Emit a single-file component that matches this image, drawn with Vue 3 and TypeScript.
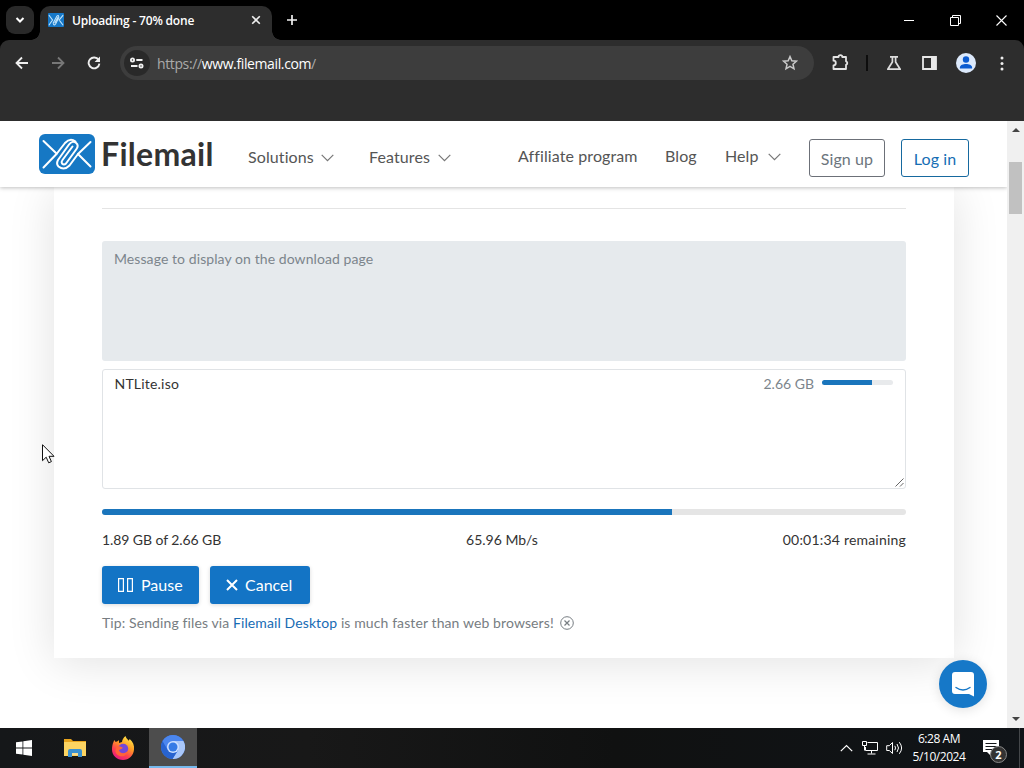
<script setup lang="ts">
const uploaded = 1.89
const total = 2.66
const percent = (uploaded / total) * 100 - 0.1
</script>

<template>
  <div class="desktop">
    <header class="tabstrip">
      <div class="tab-search">
        <svg width="10" height="8" viewBox="0 0 10 8"><path d="M1.5 2 5 5.5 8.500 2" fill="none" stroke="#fff" stroke-width="2" /></svg>
      </div>
      <div class="tab">
        <svg class="favicon" width="16" height="14" viewBox="0 0 56 40" preserveAspectRatio="none">
          <rect width="56" height="40" rx="3" fill="#1678c8" />
          <g fill="none" stroke="#bfe3fb" stroke-width="3.500" stroke-linecap="round">
            <path d="M4 7 16 20 4 34M52 7 39 20 52 34M18 29 31 9Q37 4 38 13L27 31Q20 38 18 29M24 28 34 13" />
          </g>
        </svg>
        <span class="tab-title">Uploading - 70% done</span>
        <svg class="tab-close" width="10" height="10" viewBox="0 0 10 10"><path d="m1.200 1.200 7.600 7.600m0-7.600L1.200 8.800" stroke="#eee" stroke-width="1.600" /></svg>
      </div>
      <svg class="new-tab" width="12" height="12" viewBox="0 0 12 12"><path d="M6 1v10M1 6h10" stroke="#f0f0f0" stroke-width="1.700" /></svg>
      <div class="window-buttons">
        <svg width="11" height="11" viewBox="0 0 11 11"><path d="M0 5.500h10" stroke="#fff" /></svg>
        <svg width="11" height="11" viewBox="0 0 11 11"><path d="M.5 2.500h8v8h-8zM2.500 2.500v-2h8v8h-2" fill="none" stroke="#fff" /></svg>
        <svg width="11" height="11" viewBox="0 0 11 11"><path d="m.5.5 10 10m0-10-10 10" stroke="#fff" stroke-width="1.100" /></svg>
      </div>
    </header>

    <div class="toolbar">
      <div class="toolbar-row">
        <svg class="back" width="14" height="14" viewBox="0 0 14 14"><path d="M13 7H2M7 1.500 1.500 7 7 12.500" fill="none" stroke="#eee" stroke-width="1.800" /></svg>
        <svg class="forward" width="14" height="14" viewBox="0 0 14 14"><path d="M1 7h11M7 1.500 12.500 7 7 12.500" fill="none" stroke="#777" stroke-width="1.800" /></svg>
        <svg class="reload" width="14" height="14" viewBox="0 0 14 14"><path d="M11.600 4A5.400 5.400 0 1 0 12.400 7.600" fill="none" stroke="#eee" stroke-width="1.900" /><path d="M13 .5V6H7.600z" fill="#eee" /></svg>
        <div class="omnibox">
          <div class="site-info">
            <svg width="14" height="12" viewBox="0 0 14 12"><g fill="none" stroke="#f2f2f2" stroke-width="1.800"><circle cx="2.500" cy="3" r="1.600" /><path d="M6.300 3H12.500M1 9h6.500" /><circle cx="11" cy="9" r="1.600" /></g></svg>
          </div>
          <span class="url"><i>https://</i>www.filemail.com<i>/</i></span>
          <svg class="star" width="16" height="16" viewBox="0 0 16 16"><path d="m8 1.600 1.850 4.200 4.550.42-3.420 3.050 1 4.500L8 11.400l-3.980 2.370 1-4.500L1.600 6.220l4.550-.42z" fill="none" stroke="#c9c9c9" stroke-width="1.500" /></svg>
        </div>
        <svg class="puzzle" width="18" height="18" viewBox="0 0 18 18"><path d="M1.500 4h5a1.900 1.900 0 0 1 3.800 0H14v4.300a1.900 1.900 0 0 1 0 3.600V16H1.500v-3.700a2.300 2.300 0 0 0 0-4.600z" fill="none" stroke="#e4e4e4" stroke-width="1.800" stroke-linejoin="round" /></svg>
        <i class="divider"></i>
        <svg class="flask" width="16" height="16" viewBox="0 0 16 16"><path d="M4 1.800h8M6.400 2v5L1.800 14.200h12.400L9.600 7V2" fill="none" stroke="#dedede" stroke-width="1.700" stroke-linejoin="round" /></svg>
        <svg class="side-panel" width="15" height="14" viewBox="0 0 15 14"><path d="M1 1h13v12H1z" fill="none" stroke="#e8e8e8" stroke-width="1.800" /><path d="M9 1h5v12H9z" fill="#e8e8e8" /></svg>
        <svg class="profile" width="20" height="20" viewBox="0 0 20 20"><circle cx="10" cy="10" r="10" fill="#dce9fb" /><circle cx="10" cy="6.500" r="3.200" fill="#0b5bd0" /><path d="M3.900 15.500v-1.100c0-2.200 3.300-3.400 6.100-3.400s6.100 1.200 6.100 3.400v1.100z" fill="#0b5bd0" /></svg>
        <svg class="kebab" width="4" height="15" viewBox="0 0 4 15"><g fill="#eee"><circle cx="2" cy="2" r="1.500" /><circle cx="2" cy="7.500" r="1.500" /><circle cx="2" cy="13" r="1.500" /></g></svg>
      </div>
    </div>

    <div class="viewport">
      <main class="page">
        <nav class="site-nav">
          <svg class="logo" width="56" height="40" viewBox="0 0 56 40">
            <rect width="56" height="40" rx="6" fill="#1678c4" />
            <g fill="none" stroke="#fff" stroke-width="2" stroke-linecap="round" stroke-linejoin="round">
              <path d="M4.500 7 17.500 19.500M17.500 20 4.500 33.500M51.500 8 39 20 51.500 32.500" />
              <path d="M39 20 30.500 31.500Q25 37 19.500 32.500 17 30 19 26L30 10.500Q33.500 6 37.200 9 40 11.500 37.500 15L27 29.500Q25 31.500 23 29.500 22 28 23.500 26L33.500 12.500" />
              <path d="M17.500 20 26 9Q31 3.500 36.500 7.500" />
            </g>
          </svg>
          <span class="wordmark">Filemail</span>
          <a class="nav-item solutions">Solutions</a>
          <svg class="chevron" width="13" height="8" viewBox="0 0 13 8"><path d="m.7.8 5.800 5.800L12.300.8" /></svg>
          <a class="nav-item features">Features</a>
          <svg class="chevron" width="13" height="8" viewBox="0 0 13 8"><path d="m.7.8 5.800 5.800L12.300.8" /></svg>
          <a class="nav-item affiliate">Affiliate program</a>
          <a class="nav-item blog">Blog</a>
          <a class="nav-item help">Help</a>
          <svg class="chevron help-chevron" width="13" height="8" viewBox="0 0 13 8"><path d="m.7.8 5.800 5.800L12.300.8" /></svg>
          <button class="outline signup">Sign up</button>
          <button class="outline login">Log in</button>
        </nav>

        <section class="card">
          <hr />
          <div class="message">Message to display on the download page</div>
          <div class="files">
            <span class="file-name">NTLite.iso</span>
            <span class="file-size">2.66 GB</span>
            <div class="mini-bar"><div :style="{ width: percent + '%' }"></div></div>
            <svg class="resize" width="9" height="9" viewBox="0 0 9 9"><path d="M.5 8.500l8-8M5 8.500 8.500 5" stroke="#555" stroke-width=".9" /></svg>
          </div>
          <div class="bar"><div :style="{ width: percent + '%' }"></div></div>
          <div class="stats">
            <span class="done">1.89 GB of 2.66 GB</span>
            <span class="speed">65.96 Mb/s</span>
            <span class="left">00:01:34 remaining</span>
          </div>
          <div class="actions">
            <button class="solid pause">
              <svg width="16" height="16" viewBox="0 0 16 16"><path d="M.6 1.600h4.800v12.800H.6zM9.600 1.600h4.800v12.800H9.600z" fill="none" stroke="#fff" stroke-width="1.200" /></svg>
              <span>Pause</span>
            </button>
            <button class="solid cancel">
              <svg width="12" height="12" viewBox="0 0 12 12"><path d="m1 1 10 10M11 1 1 11" stroke="#fff" stroke-width="2" /></svg>
              <span>Cancel</span>
            </button>
          </div>
          <p class="tip">
            <span>Tip: Sending files via <a>Filemail Desktop</a> is much faster than web browsers!</span>
            <svg width="14" height="14" viewBox="0 0 14 14"><g fill="none" stroke="#777d82"><circle cx="7" cy="7" r="6.300" /><path d="m4.500 4.500 5 5m0-5-5 5" stroke-width="1.200" /></g></svg>
          </p>
        </section>
      </main>
      <div class="scrollbar">
        <svg width="8" height="4" viewBox="0 0 8 4"><path d="M0 4 4 0l4 4z" fill="#444" /></svg>
        <div class="thumb"></div>
        <svg class="down" width="8" height="4" viewBox="0 0 8 4"><path d="M0 0h8L4 4z" fill="#444" /></svg>
      </div>
      <div class="chat">
        <svg width="22" height="25" viewBox="0 0 22 25"><path d="M3 0h16q3 0 3 3v21.500L17 22H3q-3 0-3-3V3q0-3 3-3z" fill="#fff" /><path d="M4 15.500q7 5 14 0" fill="none" stroke="#1678c8" stroke-width="1.400" stroke-linecap="round" /></svg>
      </div>
      <svg class="cursor" width="13" height="20" viewBox="0 0 13 20"><path d="M.5.700v16l3.700-3.500 2.500 5.600 2.700-1.200L7 12.300h5z" fill="#fff" stroke="#111" /></svg>
    </div>

    <footer class="taskbar">
      <div class="task start"><svg width="16" height="16" viewBox="0 0 16 16"><path d="M0 2.300 6.500 1.400v6.100H0zM7.300 1.300 16 0v7.500H7.300zM0 8.400h6.500v6.200L0 13.700zM7.300 8.400H16V16l-8.700-1.300z" fill="#fff" /></svg></div>
      <div class="task explorer"><svg width="22" height="18" viewBox="0 0 22 18"><path d="M0 0h7l2 2h13v4H0z" fill="#e8a41d" /><path d="M0 3h22v14H0z" fill="#fcd462" /><path d="M4 18v-6q0-2 2-2h10q2 0 2 2v6h-4v-4H8v4z" fill="#3a91d0" /><path d="M8 14h6v2H8z" fill="#f8dd91" /></svg></div>
      <div class="task firefox">
        <svg width="24" height="24" viewBox="0 0 24 24">
          <defs>
            <linearGradient id="flame" x1=".8" y1="0" x2=".25" y2="1"><stop offset="0" stop-color="#fff04d" /><stop offset=".4" stop-color="#ff9a24" /><stop offset=".7" stop-color="#ff4050" /><stop offset="1" stop-color="#e31587" /></linearGradient>
          </defs>
          <path d="M2.500 6 3.200 4l1.500 2L7 5l1-1v3l3-1c.3-2.500 1.500-4.500 3.500-6 .3 2 2 3 3.200 4.800l1-1.800C22 6 23.500 9 23 13.500 22.500 19.500 18 24 12 24S1 19.500 1 13.500C1 10.500 1.500 8 2.500 6z" fill="url(#flame)" />
          <circle cx="12.200" cy="12.800" r="5" fill="#7548d8" />
          <path d="M6 10.500c2-.7 4 .1 6 1.200-1.500 2-3.500 1.300-4 2.800 1 3 6 4 9 0-1 5-5 7-9 5.200S3.500 14 6 10.500z" fill="#ff6438" />
        </svg>
      </div>
      <div class="task active">
        <svg width="24" height="24" viewBox="0 0 24 24">
          <circle cx="12" cy="12" r="12" fill="#3e78e5" />
          <path d="M12 6h10.400A12 12 0 0 1 11.500 24L17 15.200z" fill="#a9c7fa" />
          <path d="M1.600 6A12 12 0 0 0 11.500 24L17 15 7 15z" fill="#2863cf" />
          <path d="M1.600 6A12 12 0 0 1 22.400 6H12l-5.200 9z" fill="#4b86ee" />
          <circle cx="12" cy="12" r="6" fill="#cfe1ff" /><circle cx="12" cy="12" r="4.500" fill="#367be6" />
        </svg>
      </div>
      <div class="tray">
        <svg width="13" height="8" viewBox="0 0 13 8"><path d="M.8 7.200 6.500 1.500l5.700 5.700" fill="none" stroke="#fff" stroke-width="1.200" /></svg>
        <svg class="network" width="17" height="14" viewBox="0 0 17 14"><g fill="none" stroke="#fff"><path d="M5.500 1.500h10v8h-12V6M.5.500h4v4h-4zM2.500 4.500v5M9.500 9.500v3M5.500 13h8" /></g></svg>
        <svg class="sound" width="18" height="14" viewBox="0 0 18 14"><g fill="none" stroke="#fff"><path d="M.7 4.700h2.600L6.500 1.500v11L3.300 9.500H.7z" /><path d="M8.800 4.800q1.500 2.200 0 4.400M11 3q3 4 0 8M13.300 1.200q4.600 5.800 0 11.600" /></g></svg>
        <div class="clock"><span class="time">6:28 AM</span><span class="date">5/10/2024</span></div>
        <div class="notify">
          <svg width="16" height="16" viewBox="0 0 16 16"><path d="M0 0h16v12H8v4l-4-4H0z" fill="#fff" /><path d="M2.500 3.500h11M2.500 6.500h11M2.500 9.500h7" stroke="#14171a" /></svg>
          <b>2</b>
        </div>
        <i class="peek"></i>
      </div>
    </footer>
  </div>
</template>

<style>
html, body { margin: 0; overflow: hidden; }
</style>

<style scoped>
.desktop { width: 1024px; height: 768px; display: flex; flex-direction: column; overflow: hidden; background: #fff; font-family: "Open Sans", sans-serif; box-sizing: border-box; }
.desktop * { box-sizing: border-box; }
svg { display: block; flex: none; }
i { font-style: normal; }
.tabstrip { height: 40px; flex: none; background: #000; display: flex; align-items: center; padding: 0 17px 0 6px; }
.tab-search { width: 28px; height: 28px; border-radius: 9px; background: #292929; display: grid; place-items: center; }
.tab { position: relative; margin-left: 6px; margin-top: 6px; width: 232px; height: 34px; border-radius: 10px 10px 0 0; background: #2d2d2d; display: flex; align-items: center; padding: 0 11px 6px 8px; }
.tab::before, .tab::after { content: ""; position: absolute; bottom: 0; width: 9px; height: 9px; }
.tab::before { left: -9px; background: radial-gradient(circle at 0 0, transparent 8.500px, #2d2d2d 9px); }
.tab::after { right: -9px; background: radial-gradient(circle at 100% 0, transparent 8.500px, #2d2d2d 9px); }
.tab-title { margin-left: 8px; width: 179px; color: #fff; font-size: 12px; font-weight: 600; white-space: nowrap; letter-spacing: -0.180px; }
.new-tab { margin-left: 14px; }
.window-buttons { margin-left: auto; display: flex; gap: 35px; }
.toolbar { height: 81px; flex: none; background: #000; }
.toolbar-row { height: 81px; background: #2d2d2d; border-radius: 9px 9px 0 0; display: flex; align-items: flex-start; padding-left: 15px; }
.toolbar-row > svg { margin-top: 16px; }
.toolbar-row .forward { margin-left: 22px; }
.toolbar-row .reload { margin-left: 22px; }
.omnibox { margin: 6px 0 0 19px; width: 694px; height: 34px; border-radius: 17px; background: #3d3d3d; display: flex; align-items: center; padding: 0 16px 0 4px; }
.site-info { width: 26px; height: 26px; border-radius: 50%; background: #292929; display: grid; place-items: center; }
.url { margin-left: 7px; color: #fff; font-size: 14px; white-space: nowrap; letter-spacing: -0.380px; }
.url i { color: #aaa; }
.star { margin-left: auto; }
.toolbar-row .puzzle { margin-top: 13px; margin-left: 18px; }
.divider { width: 2px; height: 16px; background: #0d0d0d; margin: 15px 0 0 16px; }
.toolbar-row .flask { margin: 15px 0 0 18px; }
.toolbar-row .side-panel { margin-left: 20px; }
.toolbar-row .profile { margin: 13px 0 0 19px; }
.toolbar-row .kebab { margin-left: 24px; }
.viewport { position: relative; height: 607px; flex: none; display: flex; overflow: hidden; }
.page { width: 1007px; font-family: Lato, sans-serif; background: #fff; overflow: hidden; }
.site-nav { position: relative; z-index: 2; height: 66px; background: #fff; box-shadow: 0 1px 4px rgba(0, 0, 0, .25); display: flex; align-items: center; padding-left: 39px; }
.wordmark { width: 153px; padding-left: 6px; font-size: 32px; line-height: 40px; font-weight: 700; color: #333; letter-spacing: .3px; flex: none; margin-top: -1px; }
.nav-item { color: #555; font-size: 16px; line-height: 22px; white-space: nowrap; letter-spacing: .1px; margin-top: 6px; }
.solutions { width: 73px; }
.chevron { margin-top: 8px; fill: none; stroke: #777; stroke-width: 1.200; }
.features { width: 69px; margin-left: 35px; }
.affiliate { width: 119px; margin-left: 67px; margin-top: 4px; }
.blog { width: 32px; margin-left: 28px; margin-top: 4px; }
.help { width: 34px; margin-left: 28px; margin-top: 4px; }
.help-chevron { margin-left: 9px; margin-top: 6px; }
.outline { margin-top: 8px; height: 38px; border-radius: 3px; background: #fff; font-family: inherit; font-size: 16px; padding: 0; letter-spacing: .1px; }
.signup { width: 76px; margin-left: 28px; border: 1px solid #6c7078; color: #6c757d; }
.login { width: 68px; margin-left: 16px; border: 1px solid #16699f; color: #166eb4; }
.card { margin-left: 54px; width: 900px; height: 471px; padding: 21px 48px 0; background: #fff; box-shadow: 0 4px 44px rgba(0, 0, 0, .12); font-size: 14px; }
hr { height: 1px; border: 0; margin: 0 0 32px; background: #e4e4e4; }
.message { height: 120px; background: #e6eaed; border-radius: 3px; padding: 9px 12px; line-height: 18px; color: #7c858c; letter-spacing: .08px; }
.files { position: relative; margin-top: 8px; height: 120px; border: 1px solid #e0e3e6; border-radius: 3px; padding: 5px 12px 0 11.500px; display: flex; align-items: flex-start; line-height: 18px; }
.file-name { color: #333; letter-spacing: .2px; }
.file-size { margin-left: auto; color: #7c858c; }
.mini-bar { width: 71px; height: 5px; border-radius: 3px; overflow: hidden; background: #e8eaec; margin: 5px 0 0 8px; }
.mini-bar div, .bar div { height: 100%; background: #1a75bc; }
.resize { position: absolute; right: 1px; bottom: 1px; }
.bar { margin-top: 20px; height: 6px; border-radius: 3px; overflow: hidden; background: #e5e5e5; }
.stats { margin-top: 15px; height: 20px; line-height: 20px; color: #333; display: flex; justify-content: space-between; }
.done { letter-spacing: -0.080px; }
.left { letter-spacing: .2px; }
.actions { margin-top: 16px; display: flex; gap: 11px; }
.solid { height: 38px; border: 0; border-radius: 3px; background: #1374c5; color: #fff; font-family: inherit; font-size: 16px; padding: 0 0 0 16px; display: flex; align-items: center; box-shadow: 0 1px 4px rgba(0, 0, 0, .15); }
.solid span { margin: -1px 0 0 7px; }
.pause { width: 97px; }
.cancel { width: 100px; }
.tip { margin: 9px 0 0; height: 20px; line-height: 20px; display: flex; align-items: center; color: #777d82; white-space: nowrap; letter-spacing: .105px; }
.tip a { color: #176bb4; }
.tip svg { margin-left: 6px; }
.scrollbar { position: relative; z-index: 3; width: 17px; background: #f0f0f0; display: flex; flex-direction: column; align-items: center; padding-top: 7px; }
.thumb { width: 13px; height: 52px; margin-top: 30px; background: #c1c1c1; }
.down { margin-top: auto; margin-bottom: 7px; }
.chat { position: absolute; left: 939px; top: 539px; width: 48px; height: 48px; border-radius: 50%; background: #1678c8; display: grid; place-items: center; box-shadow: 0 2px 12px rgba(0, 0, 0, .12); }
.cursor { position: absolute; left: 42px; top: 323px; }
.taskbar { height: 40px; flex: none; background: linear-gradient(90deg, #151719, #181818 30%, #101111 60%, #101418); display: flex; }
.task { width: 49px; display: grid; place-items: center; }
.start { width: 48px; }
.explorer { width: 53px; }
.firefox { width: 48px; padding-right: 3px; }
.active { width: 48px; background: #4d4d4d; border-bottom: 2px solid #76b9ed; }
.firefox svg { margin-left: -1px; }
.tray { margin-left: auto; width: 184px; display: flex; align-items: center; }
.network { margin-left: 9px; }
.sound { margin-left: 7px; }
.clock { width: 64px; margin-left: 3px; display: flex; flex-direction: column; align-items: center; color: #fff; font-size: 12px; line-height: 18px; white-space: nowrap; letter-spacing: -0.450px; }
.notify { position: relative; margin-left: 12px; }
.notify b { position: absolute; left: 7px; top: 6px; width: 17px; height: 17px; border-radius: 50%; border: 1px solid #888; background: #333; color: #fff; font-size: 11px; line-height: 15px; text-align: center; }
.peek { margin-left: auto; width: 1px; height: 40px; background: #44474a; margin-right: 4px; }
</style>
